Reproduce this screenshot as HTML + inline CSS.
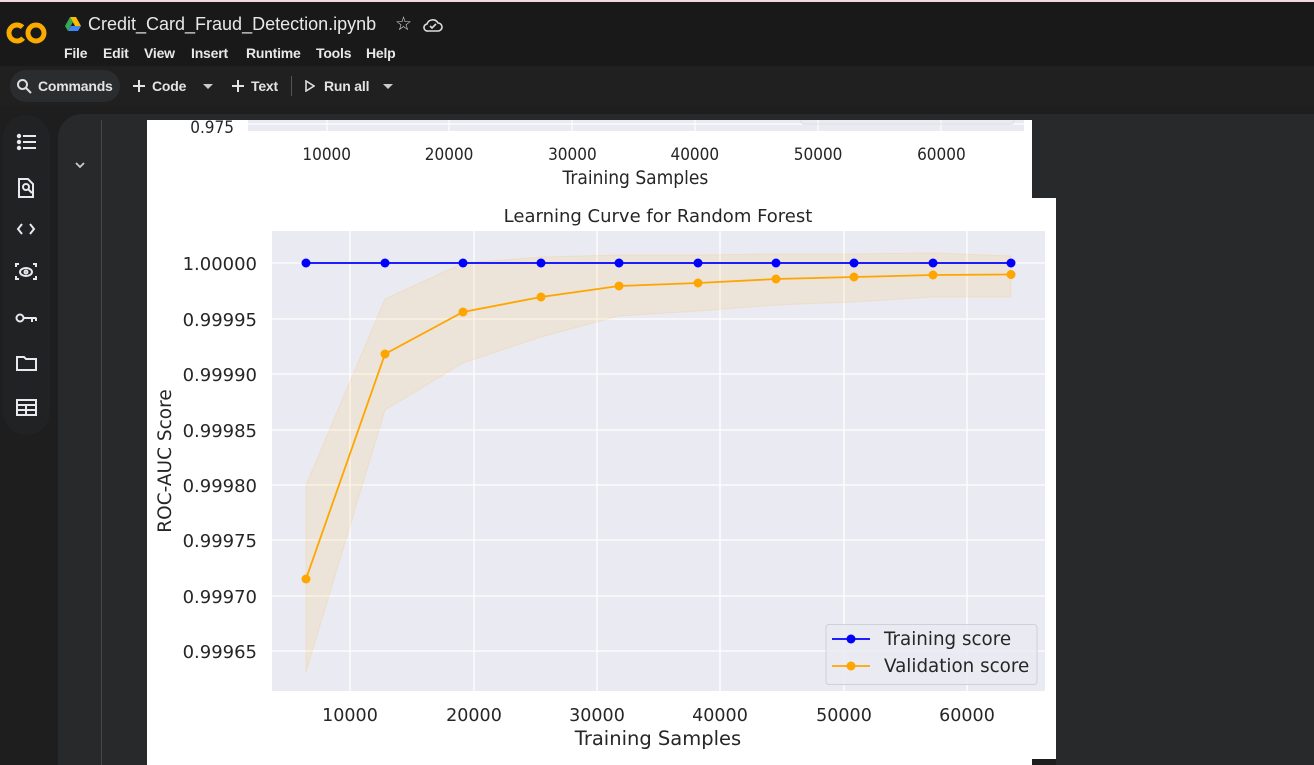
<!DOCTYPE html>
<html><head><meta charset="utf-8"><style>
*{margin:0;padding:0;box-sizing:border-box}
body{width:1314px;height:765px;overflow:hidden;background:#1e1e1f;font-family:"Liberation Sans",sans-serif;color:#e3e3e3;position:relative}
.top{position:absolute;left:0;top:0;width:1314px;height:66px;background:#191919;border-top:2px solid #f0d8dc}
.title{position:absolute;left:88px;top:12px;font-size:18px;color:#e8e8e8}
.menu span{position:absolute;top:43px;font-size:14px;color:#e8e8e8;font-weight:bold;letter-spacing:-0.2px}
.tb{position:absolute;left:0;top:66px;width:1314px;height:40px;background:#202021}
.tb .it{position:absolute;top:12px;font-size:14px;color:#e3e3e3;font-weight:bold;letter-spacing:-0.2px}
.pill{position:absolute;left:10px;top:4px;width:110px;height:32px;border-radius:16px;background:#2b2c2e}
.side{position:absolute;left:3px;top:115px;width:47px;height:320px;border-radius:24px;background:#212224}
.main{position:absolute;left:58px;top:114px;width:1256px;height:651px;background:#28292b;border-top-left-radius:24px}
.vl{position:absolute;left:101px;top:120px;width:1px;height:645px;background:#46474a}
</style></head><body>
<div class="top">
<svg style="position:absolute;left:6px;top:17px" width="42" height="28" viewBox="0 0 42 28"><circle cx="11" cy="14" r="8" fill="none" stroke="#f9ab00" stroke-width="5" stroke-dasharray="38 12" transform="rotate(40 11 14)"/><circle cx="30" cy="14" r="8" fill="none" stroke="#f9ab00" stroke-width="5"/></svg>
<svg style="position:absolute;left:65px;top:15px" width="16" height="14" viewBox="0 0 16 14"><path d="M5 0h6l5 9h-6z" fill="#fbbc04"/><path d="M5 0L0 9l3 5 5-9z" fill="#34a853"/><path d="M3 14h10l3-5H6z" fill="#4285f4"/></svg>
<div class="title">Credit_Card_Fraud_Detection.ipynb</div>
<div style="position:absolute;left:395px;top:11px;font-size:19px;color:#ddd">☆</div>
<svg style="position:absolute;left:423px;top:16px" width="20" height="14" viewBox="0 0 20 14"><path d="M5 13h10a4 4 0 0 0 0-8 6 6 0 0 0-11 1 3.5 3.5 0 0 0 1 7z" fill="none" stroke="#ddd" stroke-width="1.6"/><path d="M7 8l2 2 4-4" fill="none" stroke="#ddd" stroke-width="1.6"/></svg>
<div class="menu"><span style="left:64px">File</span><span style="left:103px">Edit</span><span style="left:144px">View</span><span style="left:191px">Insert</span><span style="left:246px">Runtime</span><span style="left:316px">Tools</span><span style="left:366px">Help</span></div>
</div>
<div class="tb">
<div class="pill"></div>
<svg style="position:absolute;left:16px;top:12px" width="16" height="16" viewBox="0 0 16 16"><circle cx="6.5" cy="6.5" r="4.5" fill="none" stroke="#ddd" stroke-width="2"/><path d="M10 10l5 5" stroke="#ddd" stroke-width="2"/></svg>
<div class="it" style="left:38px">Commands</div>
<svg style="position:absolute;left:132px;top:79px;position:fixed" width="14" height="14"><path d="M7 1v12M1 7h12" stroke="#e3e3e3" stroke-width="2"/></svg>
<div class="it" style="left:152px">Code</div>
<svg style="position:fixed;left:203px;top:84px" width="10" height="6"><path d="M0 0h10L5 5z" fill="#ccc"/></svg>
<svg style="position:fixed;left:231px;top:79px" width="14" height="14"><path d="M7 1v12M1 7h12" stroke="#e3e3e3" stroke-width="2"/></svg>
<div class="it" style="left:251px">Text</div>
<div style="position:absolute;left:291px;top:10px;width:1px;height:20px;background:#555"></div>
<svg style="position:fixed;left:305px;top:80px" width="10" height="12"><path d="M1 1l8 5-8 5z" fill="none" stroke="#ddd" stroke-width="1.6"/></svg>
<div class="it" style="left:324px">Run all</div>
<svg style="position:fixed;left:383px;top:84px" width="10" height="6"><path d="M0 0h10L5 5z" fill="#ccc"/></svg>
</div>
<div class="side"></div>
<svg style="position:absolute;left:0;top:120px" width="52" height="300" viewBox="0 0 52 300" fill="none" stroke="#e8e8ee" stroke-width="2">
<circle cx="19" cy="16" r="1.2" fill="#e8e8ee"/><circle cx="19" cy="22" r="1.2" fill="#e8e8ee"/><circle cx="19" cy="28" r="1.2" fill="#e8e8ee"/><path d="M23 16h13M23 22h13M23 28h13"/>
<path d="M19 59h9l5 5v13H19z"/><circle cx="26" cy="67" r="3"/><path d="M28 69l4 4"/>
<path d="M22 104l-4 5 4 5M30 104l4 5-4 5"/>
<path d="M16 147v-3h3M33 144h3v3M36 156v3h-3M19 159h-3v-3"/><ellipse cx="26" cy="152" rx="6" ry="4"/><circle cx="26" cy="152" r="1.5"/>
<circle cx="20" cy="198" r="3.5"/><path d="M23.5 198h13M32 198v4M36 198v3"/>
<path d="M17 237h7l2 2h10v11H17z"/>
<path d="M17 280h19v15H17zM17 285h19M17 290h19M26 285v10"/>
</svg>
<div class="main"></div>
<svg style="position:absolute;left:74px;top:160px" width="12" height="10" viewBox="0 0 12 10"><path d="M2 3l4 4 4-4" fill="none" stroke="#ccc" stroke-width="1.8"/></svg>
<div class="vl"></div>
<svg style="position:absolute;left:0;top:0" width="1314" height="765" viewBox="0 0 1314 765" font-family="DejaVu Sans, sans-serif" fill="#262626">
<rect x="147" y="120" width="885" height="78" fill="#fff"/>
<rect x="248" y="120" width="776" height="11" fill="#eaeaf2"/>
<g stroke="#fff" stroke-width="1.2"><path d="M327 120v11M449 120v11M572 120v11M695 120v11M818 120v11M941 120v11M248 124h776"/></g>
<path d="M801 120v1a3 3 0 0 0 3 3h207a3 3 0 0 0 3-3v-1" fill="none" stroke="#ddd"/>
<g transform="scale(0.9 1)"><text x="260" y="133" font-size="17" text-anchor="end" fill="#262626">0.975</text>
<g font-size="17" text-anchor="middle"><text x="363" y="160">10000</text><text x="499" y="160">20000</text><text x="636" y="160">30000</text><text x="772" y="160">40000</text><text x="909" y="160">50000</text><text x="1046" y="160">60000</text><text x="706" y="184" font-size="19">Training Samples</text></g></g>
<rect x="147" y="198" width="909" height="567" fill="#fff"/>
<rect x="1032" y="759" width="24" height="6" fill="#1e1e1f"/>
<text x="658" y="222" font-size="18" text-anchor="middle">Learning Curve for Random Forest</text>
<rect x="272" y="231" width="773" height="460" fill="#eaeaf2"/>
<g stroke="#fff" stroke-width="1.3"><path d="M350 231v460M474 231v460M597 231v460M720 231v460M844 231v460M967 231v460M272 263h773M272 319h773M272 374h773M272 430h773M272 485h773M272 540h773M272 596h773M272 651h773"/></g>
<polygon points="306,485 385,299 463,263 541,257 619,255 698,255 776,254 854,254 933,253 1011,256 1011,297 933,297 854,302 776,305 698,311 619,316 541,337 463,363 385,410 306,672" fill="#ffa500" fill-opacity="0.1" stroke="#ffa500" stroke-opacity="0.12"/>
<polyline points="306,263 1011,263" stroke="#0000ff" stroke-width="1.8" fill="none"/>
<g fill="#0000ff"><circle cx="306" cy="263" r="4.5"/><circle cx="385" cy="263" r="4.5"/><circle cx="463" cy="263" r="4.5"/><circle cx="541" cy="263" r="4.5"/><circle cx="619" cy="263" r="4.5"/><circle cx="698" cy="263" r="4.5"/><circle cx="776" cy="263" r="4.5"/><circle cx="854" cy="263" r="4.5"/><circle cx="933" cy="263" r="4.5"/><circle cx="1011" cy="263" r="4.5"/></g>
<polyline points="306,579 385,354 463,312 541,297 619,286 698,283 776,279 854,277 933,275 1011,274.5" stroke="#ffa500" stroke-width="1.8" fill="none"/>
<g fill="#ffa500"><circle cx="306" cy="579" r="4.5"/><circle cx="385" cy="354" r="4.5"/><circle cx="463" cy="312" r="4.5"/><circle cx="541" cy="297" r="4.5"/><circle cx="619" cy="286" r="4.5"/><circle cx="698" cy="283" r="4.5"/><circle cx="776" cy="279" r="4.5"/><circle cx="854" cy="277" r="4.5"/><circle cx="933" cy="275" r="4.5"/><circle cx="1011" cy="274.5" r="4.5"/></g>
<g font-size="18" text-anchor="end"><text x="257" y="270">1.00000</text><text x="257" y="326">0.99995</text><text x="257" y="381">0.99990</text><text x="257" y="437">0.99985</text><text x="257" y="492">0.99980</text><text x="257" y="547">0.99975</text><text x="257" y="603">0.99970</text><text x="257" y="658">0.99965</text></g>
<text transform="translate(171 461) rotate(-90)" font-size="18.5" text-anchor="middle">ROC-AUC Score</text>
<g font-size="17.5" text-anchor="middle"><text x="350" y="721">10000</text><text x="474" y="721">20000</text><text x="597" y="721">30000</text><text x="720" y="721">40000</text><text x="844" y="721">50000</text><text x="967" y="721">60000</text><text x="658" y="745" font-size="19.5">Training Samples</text></g>
<rect x="826" y="624.5" width="211" height="60" rx="3" fill="#eaeaf2" fill-opacity="0.85" stroke="#d0d0d8"/>
<path d="M832 639h38" stroke="#0000ff" stroke-width="1.8"/><circle cx="851" cy="639" r="4.5" fill="#0000ff"/>
<path d="M832 666h38" stroke="#ffa500" stroke-width="1.8"/><circle cx="851" cy="666" r="4.5" fill="#ffa500"/>
<text x="884" y="645" font-size="18.3">Training score</text><text x="884" y="672" font-size="18.3">Validation score</text>
</svg>
</body></html>
